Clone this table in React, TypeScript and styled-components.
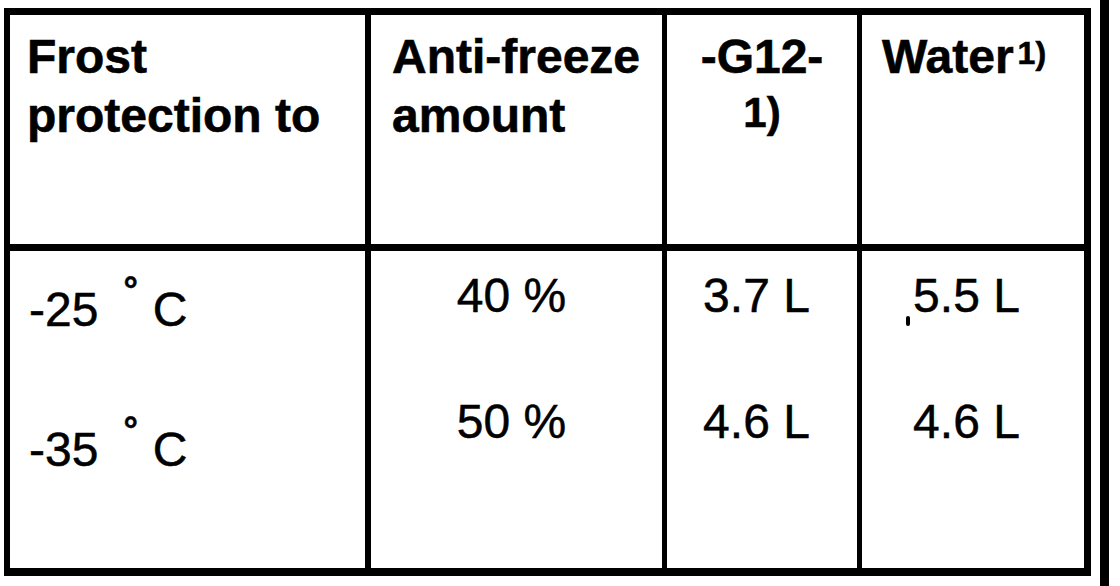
import React from "react";
import styled, { createGlobalStyle } from "styled-components";

const Global = createGlobalStyle`
  html, body { margin: 0; padding: 0; background: #ffffff; }
  body { font-family: "Liberation Sans", Arial, sans-serif; color: #000; }
`;

const Page = styled.div`
  display: flex;
  align-items: flex-start;
  width: 1120px;
  height: 586px;
  background: #fff;
  overflow: hidden;
`;

const Table = styled.div`
  margin: 8px 0 0 4px;
  display: grid;
  grid-template-columns: 355px 297px 195px 227px;
  grid-template-rows: 236px 317px;
  border-style: solid;
  border-color: #000;
  border-width: 7px 7px 8px 6px;
  background: #fff;
`;

const EdgeBar = styled.div`
  margin-left: 9px;
  width: 9px;
  height: 586px;
  background: #000;
`;

type CellProps = { $divider?: number; $align?: "left" | "center"; $pl?: number; $pr?: number };

const HeaderCell = styled.div<CellProps>`
  box-sizing: border-box;
  border-bottom: 7px solid #000;
  border-left: ${(p) => (p.$divider ? `${p.$divider}px solid #000` : "none")};
  padding: 12px ${(p) => p.$pr ?? 0}px 0 ${(p) => p.$pl ?? 0}px;
  text-align: ${(p) => p.$align ?? "left"};
  font-weight: 700;
  font-size: 48px;
  line-height: 59px;
  white-space: nowrap;
  -webkit-text-stroke: 0.6px #000;
`;

const HeadLine = styled.div``;

const SmallHeadLine = styled.div`
  font-size: 42px;
  line-height: 53px;
`;

const Sup = styled.span`
  font-size: 32px;
  vertical-align: 9px;
  line-height: 0;
  margin-left: 4px;
`;

const BodyCell = styled.div<CellProps & { $top: number; $gap: number }>`
  box-sizing: border-box;
  border-left: ${(p) => (p.$divider ? `${p.$divider}px solid #000` : "none")};
  padding: ${(p) => p.$top}px ${(p) => p.$pr ?? 0}px 0 ${(p) => p.$pl ?? 0}px;
  display: flex;
  flex-direction: column;
  align-items: ${(p) => (p.$align === "center" ? "center" : "flex-start")};
  gap: ${(p) => p.$gap}px;
  font-size: 48px;
  line-height: 54px;
  font-weight: 400;
  white-space: nowrap;
  -webkit-text-stroke: 0.5px #000;
`;

const Value = styled.div`
  position: relative;
`;

const Degree = styled.span`
  font-size: 36px;
  font-weight: 700;
  vertical-align: 24px;
  line-height: 0;
  margin-left: 25px;
  margin-right: 15px;
`;

const Speck = styled.span`
  position: absolute;
  left: -7px;
  top: 47px;
  width: 4px;
  height: 10px;
  border-radius: 2px;
  background: #000;
`;

const rows = [
  { temp: "-25", pct: "40 %", g12: "3.7 L", water: "5.5 L", speck: true },
  { temp: "-35", pct: "50 %", g12: "4.6 L", water: "4.6 L", speck: false },
];

export default function App() {
  return (
    <>
      <Global />
      <Page>
        <Table>
          <HeaderCell $pl={17}>
            <HeadLine>Frost</HeadLine>
            <HeadLine>protection to</HeadLine>
          </HeaderCell>
          <HeaderCell $divider={6} $pl={21}>
            <HeadLine>Anti-freeze</HeadLine>
            <HeadLine>amount</HeadLine>
          </HeaderCell>
          <HeaderCell $divider={5} $align="center">
            <HeadLine>-G12-</HeadLine>
            <SmallHeadLine>1)</SmallHeadLine>
          </HeaderCell>
          <HeaderCell $divider={5} $pl={20}>
            <HeadLine>
              Water<Sup>1)</Sup>
            </HeadLine>
          </HeaderCell>

          <BodyCell $pl={19} $top={32} $gap={86}>
            {rows.map((r) => (
              <Value key={r.temp}>
                {r.temp}
                <Degree>°</Degree>C
              </Value>
            ))}
          </BodyCell>
          <BodyCell $divider={6} $align="center" $pr={10} $top={18} $gap={72}>
            {rows.map((r) => (
              <Value key={r.pct}>{r.pct}</Value>
            ))}
          </BodyCell>
          <BodyCell $divider={5} $align="center" $pr={11} $top={18} $gap={72}>
            {rows.map((r, i) => (
              <Value key={i}>{r.g12}</Value>
            ))}
          </BodyCell>
          <BodyCell $divider={5} $align="center" $pr={13} $top={18} $gap={72}>
            {rows.map((r, i) => (
              <Value key={i}>
                {r.speck && <Speck />}
                {r.water}
              </Value>
            ))}
          </BodyCell>
        </Table>
        <EdgeBar />
      </Page>
    </>
  );
}
